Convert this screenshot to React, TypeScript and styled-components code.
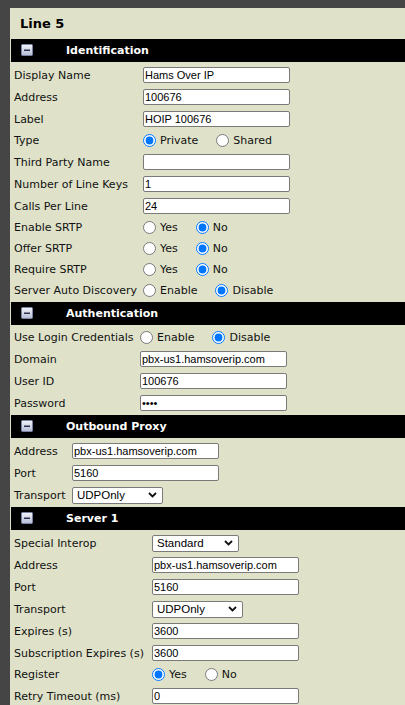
import React from "react";
import styled, { createGlobalStyle } from "styled-components";

const GlobalStyle = createGlobalStyle`
  html, body {
    margin: 0;
    padding: 0;
    background: #454545;
    overflow: hidden;
  }
  body {
    font-family: "DejaVu Sans", Verdana, sans-serif;
  }
`;

type Field =
  | { kind: "text"; label: string; value: string; password?: boolean }
  | { kind: "radio"; label: string; name: string; options: string[]; checked: number }
  | { kind: "select"; label: string; value: string; width: number };

type SectionData = {
  title: string;
  labelWidth: number;
  fields: Field[];
};

const sections: SectionData[] = [
  {
    title: "Identification",
    labelWidth: 129,
    fields: [
      { kind: "text", label: "Display Name", value: "Hams Over IP" },
      { kind: "text", label: "Address", value: "100676" },
      { kind: "text", label: "Label", value: "HOIP 100676" },
      { kind: "radio", label: "Type", name: "type", options: ["Private", "Shared"], checked: 0 },
      { kind: "text", label: "Third Party Name", value: "" },
      { kind: "text", label: "Number of Line Keys", value: "1" },
      { kind: "text", label: "Calls Per Line", value: "24" },
      { kind: "radio", label: "Enable SRTP", name: "esrtp", options: ["Yes", "No"], checked: 1 },
      { kind: "radio", label: "Offer SRTP", name: "osrtp", options: ["Yes", "No"], checked: 1 },
      { kind: "radio", label: "Require SRTP", name: "rsrtp", options: ["Yes", "No"], checked: 1 },
      { kind: "radio", label: "Server Auto Discovery", name: "sad", options: ["Enable", "Disable"], checked: 1 },
    ],
  },
  {
    title: "Authentication",
    labelWidth: 126,
    fields: [
      { kind: "radio", label: "Use Login Credentials", name: "ulc", options: ["Enable", "Disable"], checked: 1 },
      { kind: "text", label: "Domain", value: "pbx-us1.hamsoverip.com" },
      { kind: "text", label: "User ID", value: "100676" },
      { kind: "text", label: "Password", value: "pass", password: true },
    ],
  },
  {
    title: "Outbound Proxy",
    labelWidth: 58,
    fields: [
      { kind: "text", label: "Address", value: "pbx-us1.hamsoverip.com" },
      { kind: "text", label: "Port", value: "5160" },
      { kind: "select", label: "Transport", value: "UDPOnly", width: 91 },
    ],
  },
  {
    title: "Server 1",
    labelWidth: 138,
    fields: [
      { kind: "select", label: "Special Interop", value: "Standard", width: 87 },
      { kind: "text", label: "Address", value: "pbx-us1.hamsoverip.com" },
      { kind: "text", label: "Port", value: "5160" },
      { kind: "select", label: "Transport", value: "UDPOnly", width: 91 },
      { kind: "text", label: "Expires (s)", value: "3600" },
      { kind: "text", label: "Subscription Expires (s)", value: "3600" },
      { kind: "radio", label: "Register", name: "reg", options: ["Yes", "No"], checked: 0 },
      { kind: "text", label: "Retry Timeout (ms)", value: "0" },
    ],
  },
];

const CollapseIcon = () => (
  <svg width="12" height="12" viewBox="0 0 12 12">
    <defs>
      <linearGradient id="cg" x1="0" y1="0" x2="0" y2="1">
        <stop offset="0" stopColor="#f4f5fa" />
        <stop offset="1" stopColor="#b4bbd4" />
      </linearGradient>
    </defs>
    <rect x="0.5" y="0.5" width="11" height="11" rx="1" fill="url(#cg)" stroke="#7c84a4" />
    <rect x="3" y="5.5" width="6" height="1.5" fill="#2c3152" />
  </svg>
);

const Chevron = () => (
  <svg width="9" height="6" viewBox="0 0 9 6">
    <path d="M1 1 L4.5 4.5 L8 1" fill="none" stroke="#111" strokeWidth="1.8" />
  </svg>
);

export default function App() {
  return (
    <>
      <GlobalStyle />
      <Frame>
        <Panel>
          <Title>Line 5</Title>
          {sections.map((s) => (
            <Section key={s.title}>
              <SectionHeader>
                <IconSlot>
                  <CollapseIcon />
                </IconSlot>
                {s.title}
              </SectionHeader>
              <Rows>
                {s.fields.map((f, i) => (
                  <Row key={i} $labelWidth={s.labelWidth} $height={f.kind === "radio" ? 21 : 22}>
                    <Label>{f.label}</Label>
                    {f.kind === "text" && (
                      <TextInput
                        type={f.password ? "password" : "text"}
                        defaultValue={f.value}
                      />
                    )}
                    {f.kind === "select" && (
                      <SelectBox $width={f.width}>
                        <span>{f.value}</span>
                        <Chevron />
                      </SelectBox>
                    )}
                    {f.kind === "radio" && (
                      <RadioGroup>
                        {f.options.map((o, j) => (
                          <Option key={o}>
                            <Radio type="radio" name={f.name} defaultChecked={j === f.checked} />
                            {o}
                          </Option>
                        ))}
                      </RadioGroup>
                    )}
                  </Row>
                ))}
              </Rows>
            </Section>
          ))}
        </Panel>
      </Frame>
    </>
  );
}

const Frame = styled.div`
  padding: 8px 0 0 10px;
`;

const Panel = styled.div`
  background: #dfe2c9;
  min-height: 697px;
  padding-bottom: 10px;
`;

const Title = styled.h1`
  margin: 0;
  height: 31px;
  padding-left: 10px;
  display: flex;
  align-items: center;
  font-size: 13px;
  font-weight: bold;
  color: #000;
`;

const Section = styled.div`
  margin-left: 1px;
  padding-bottom: 1px;
`;

const SectionHeader = styled.div`
  height: 23px;
  background: #000;
  color: #fff;
  display: flex;
  align-items: center;
  padding-left: 10px;
  font-size: 11px;
  font-weight: bold;
`;

const IconSlot = styled.span`
  display: flex;
  margin-right: 33px;
  margin-top: -1px;
`;

const Rows = styled.div`
  margin-top: 2px;
`;

const Row = styled.div<{ $labelWidth: number; $height: number }>`
  display: grid;
  grid-template-columns: ${(p) => p.$labelWidth}px auto;
  align-items: center;
  justify-content: start;
  height: ${(p) => p.$height}px;
  padding-left: 3px;
`;

const Label = styled.span`
  font-size: 11px;
  color: #111;
  white-space: nowrap;
`;

const TextInput = styled.input`
  width: 147px;
  height: 16px;
  box-sizing: border-box;
  margin: 0;
  padding: 0 1px;
  border: 1px solid #7a7a7a;
  border-radius: 2px;
  background: #fff;
  color: #000;
  font-family: "Liberation Sans", Arial, sans-serif;
  font-size: 11px;
  outline: none;
`;

const SelectBox = styled.div<{ $width: number }>`
  width: ${(p) => p.$width}px;
  height: 17px;
  box-sizing: border-box;
  display: flex;
  align-items: center;
  justify-content: space-between;
  padding: 0 5px 0 4px;
  border: 1px solid #7a7a7a;
  border-radius: 2px;
  background: #fff;
  color: #000;
  font-family: "Liberation Sans", Arial, sans-serif;
  font-size: 11.5px;
`;

const RadioGroup = styled.div`
  display: flex;
  align-items: center;
  gap: 18px;
`;

const Option = styled.label`
  display: inline-flex;
  align-items: center;
  font-size: 11px;
  color: #111;
`;

const Radio = styled.input`
  width: 13px;
  height: 13px;
  margin: 0 4px 0 0;
`;
